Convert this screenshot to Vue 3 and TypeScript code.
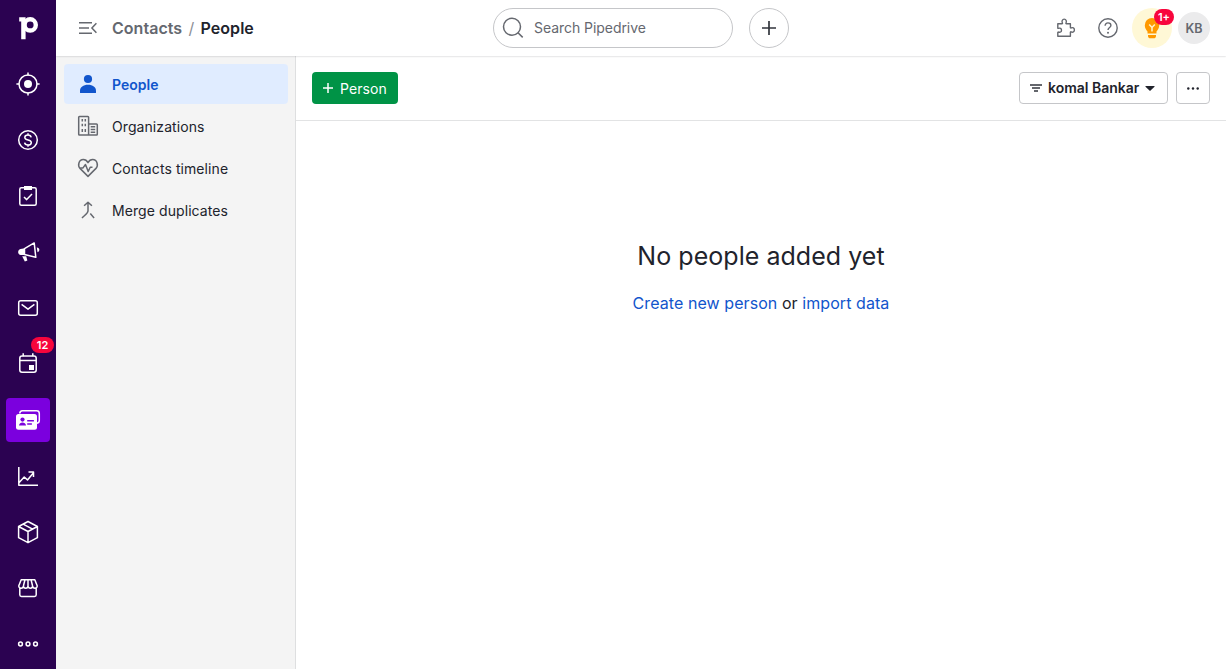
<script setup lang="ts">
interface RailItem { id: string; label: string; badge?: string; active?: boolean }
const rail: RailItem[] = [
  { id: 'logo', label: 'Pipedrive' },
  { id: 'leads', label: 'Leads' },
  { id: 'deals', label: 'Deals' },
  { id: 'projects', label: 'Projects' },
  { id: 'campaigns', label: 'Campaigns' },
  { id: 'mail', label: 'Mail' },
  { id: 'activities', label: 'Activities', badge: '12' },
  { id: 'contacts', label: 'Contacts', active: true },
  { id: 'insights', label: 'Insights' },
  { id: 'products', label: 'Products' },
  { id: 'marketplace', label: 'Marketplace' },
  { id: 'more', label: 'More' },
]
const menu: { id: string; label: string; active?: boolean }[] = [
  { id: 'people', label: 'People', active: true },
  { id: 'orgs', label: 'Organizations' },
  { id: 'timeline', label: 'Contacts timeline' },
  { id: 'merge', label: 'Merge duplicates' },
]
</script>

<template>
  <div class="app">
    <nav class="rail">
      <a v-for="r in rail" :key="r.id" class="cell" :aria-label="r.label">
        <span class="tile" :class="{ active: r.active }">
          <svg width="44" height="44" viewBox="6 6 44 44" fill="none" stroke="#fff" stroke-width="1.5" stroke-linejoin="round">
            <g v-if="r.id === 'logo'" stroke-width="4.4" stroke-linejoin="miter">
              <path d="M19.200 19.400h4.200V39.300" />
              <circle cx="30.200" cy="24.900" r="5.600" />
            </g>
            <g v-else-if="r.id === 'leads'">
              <circle cx="28" cy="28" r="9" />
              <circle cx="28" cy="28" r="4" fill="#fff" stroke="none" />
              <path d="M28 16.4v3M28 36.6v3M16.4 28h3M36.6 28h3" />
            </g>
            <g v-else-if="r.id === 'deals'">
              <circle cx="28" cy="28" r="9.3" />
              <path d="M31.200 25.300c-.3-1.500-1.500-2.300-3.200-2.300s-3.200 1-3.200 2.400c0 3.400 6.500 1.700 6.500 5 0 1.600-1.400 2.600-3.300 2.600s-3.200-.9-3.400-2.300M28 21.200v2M28 32.800v2" />
            </g>
            <g v-else-if="r.id === 'projects'">
              <rect x="19.8" y="19.700" width="16.400" height="17.600" rx="1.500" />
              <path d="M24 18h8v4h-8z" fill="#fff" stroke="none" />
              <path d="M24 29l2.700 2.600 5.300-5.500" />
            </g>
            <g v-else-if="r.id === 'campaigns'">
              <path d="M34.200 18.900L24.500 24.700v5.900l11.300 2.700z" />
              <path d="M25 24.200l-4.500.8c-3.300.7-3 5.900.3 5.900l4.200.1z" fill="#fff" stroke="none" />
              <path d="M22.200 32.300l4-.1 1.200 4.200-2.600 1.100z" fill="#fff" stroke="none" />
              <path d="M36.800 23.600c3-.2 3.400 4 .7 4.600z" fill="#fff" stroke="none" />
            </g>
            <g v-else-if="r.id === 'mail'">
              <rect x="18.700" y="20.700" width="18.600" height="14.600" rx="2" />
              <path d="M21.600 24.400L28 29.200l6.400-4.800" />
            </g>
            <g v-else-if="r.id === 'activities'">
              <rect x="19.800" y="20" width="16.400" height="16.200" rx="2.200" />
              <path d="M20 24.400h16M23.200 17.300v3M32.800 17.300v3" />
              <path d="M29 29h5v5h-5z" fill="#fff" stroke="none" />
            </g>
            <g v-else-if="r.id === 'contacts'">
              <path d="M19.800 21.500c0-1.800.8-2.800 2.600-2.800h14.200c1.700 0 2.700 1 2.700 2.700v7.200c0 1.700-.8 2.500-2.300 2.700" />
              <rect x="16" y="22" width="21" height="15.800" rx="2.500" fill="#fff" stroke="none" />
              <g fill="#7b00de" stroke="none">
                <circle cx="22.500" cy="27.600" r="2.100" />
                <path d="M19 33.600c.3-4.200 6.700-4.200 7 0z" />
              </g>
              <path d="M27.200 28.700h6.700M27.200 31.900h4.700" stroke="#7b00de" />
            </g>
            <g v-else-if="r.id === 'insights'">
              <path d="M18.800 19v18.200H38M19 34.800l5.200-5.800 3.300 2.900 5.800-6.800M28.500 24h5v5" />
            </g>
            <g v-else-if="r.id === 'products'">
              <path d="M28 17.500l9.400 5V33.700L28 38.700l-9.400-5V22.500zM18.600 22.500l9.400 5 9.400-5M28 27.500v11.200M23.100 20.100l9.500 5" />
            </g>
            <g v-else-if="r.id === 'marketplace'">
              <path d="M21.200 19.700h13.600l2.400 6c.3 3.200-4.400 3.200-4.600.3 0 2.900-4.600 2.900-4.600 0 0 2.900-4.600 2.900-4.600 0-.2 2.900-4.900 2.900-4.600-.3zM24.900 20l-1.500 6M28 20v6M31.100 20l1.500 6M19.800 28.200v6.600c0 1 .7 1.700 1.700 1.700h13c1 0 1.700-.7 1.700-1.700v-6.600" />
            </g>
            <g v-else>
              <circle cx="20.500" cy="28" r="1.900" />
              <circle cx="28" cy="28" r="1.900" />
              <circle cx="35.500" cy="28" r="1.900" />
            </g>
          </svg>
        </span>
        <span v-if="r.badge" class="badge rail-badge">{{ r.badge }}</span>
      </a>
    </nav>

    <div class="shell">
      <header class="top">
        <div class="crumbs">
          <svg class="collapse" width="20" height="20" viewBox="0 0 20 20" fill="none" stroke="#65686f" stroke-width="1.500">
            <path d="M1 4.800h13M1 10h10M1 15.300h13M18.400 5.200L13.900 10l4.500 4.800" />
          </svg>
          <span class="parent">Contacts</span><span class="slash">/</span><span class="current">People</span>
        </div>
        <div class="search">
          <svg width="24" height="24" viewBox="0 0 24 24" fill="none" stroke="#65686f" stroke-width="1.500">
            <circle cx="11" cy="10.700" r="8.500" /><path d="M17 16.700l4.700 4.700" />
          </svg>
          <span>Search Pipedrive</span>
        </div>
        <button class="add" aria-label="Quick add">
          <svg width="14" height="14" viewBox="0 0 14 14" stroke="#32353c" stroke-width="1.700"><path d="M7 0v14M0 7h14" /></svg>
        </button>
        <div class="tools">
          <svg class="puzzle" width="20" height="20" viewBox="0 0 20 20" fill="none" stroke="#65686f" stroke-width="1.400" stroke-linejoin="round">
            <path d="M1.800 5.800h4.200c.5 0 .6-.4.400-.8-.9-1.700-.1-3.900 1.800-3.900s2.700 2.200 1.800 3.900c-.2.400-.1.800.4.800h4v3.700c0 .5.4.6.8.400 1.600-.8 3.200.1 3.200 2s-1.600 2.800-3.200 2c-.4-.2-.8 0-.8.400v3.900h-12.600v-3.700c0-.5.4-.6.800-.4 1.500.6 2.900-.2 2.900-1.900s-1.400-2.500-2.900-1.900c-.4.200-.8 0-.8-.4z" />
          </svg>
          <svg class="help" width="20" height="20" viewBox="0 0 20 20" fill="none" stroke="#65686f" stroke-width="1.400">
            <circle cx="10" cy="10" r="9.200" />
            <path d="M7.100 7.800c0-1.800 1.200-2.900 2.900-2.900s2.900 1 2.900 2.500c0 2.100-2.900 2.200-2.900 4.700" />
            <circle cx="10" cy="14.700" r="1" fill="#65686f" stroke="none" />
          </svg>
          <div class="tips">
            <svg width="16" height="22" viewBox="0 0 16 22">
              <path d="M8 1a7.200 7.200 0 0 0-7.200 7.200c0 2.800 1.300 4.500 2.700 6.200v2.100h9v-2.100c1.400-1.700 2.700-3.400 2.700-6.200A7.200 7.200 0 0 0 8 1z" fill="#f90" />
              <path d="M4 18h8v1c0 1.400-1 2.300-2.300 2.300H6.300C5 21.300 4 20.400 4 19z" fill="#f90" />
              <path d="M5.200 7.500L8 10.400l2.800-2.900M8 10.400v4" fill="none" stroke="#fff5cc" stroke-width="1.500" />
            </svg>
            <span class="badge tip-badge">1+</span>
          </div>
          <div class="avatar">KB</div>
        </div>
      </header>

      <div class="body">
        <aside class="side">
          <a v-for="m in menu" :key="m.id" class="entry" :class="{ active: m.active }">
            <svg width="24" height="24" viewBox="0 0 24 24" fill="none" stroke="#65686f" stroke-width="1.500" stroke-linejoin="round">
              <g v-if="m.id === 'people'" fill="#1155cc" stroke="none">
                <circle cx="12" cy="7" r="4.100" />
                <path d="M4 20.500v-1.700c0-3.600 3.300-6 8-6s8 2.400 8 6v1.700q0 .6-.6.600H4.600q-.6 0-.6-.6z" />
              </g>
              <g v-else-if="m.id === 'orgs'">
                <path d="M12.600 21V3.200c0-.5-.3-.8-.8-.8H3.500c-.5 0-.8.300-.8.800v17.100c0 .5.300.8.800.8h17c.5 0 .8-.3.800-.8v-9.500c0-.5-.3-.8-.8-.8h-7.900" />
                <path d="M6.300 5v2.500M9.300 5v2.500M6.300 9.700v2.500M9.300 9.700v2.500M6.300 15v3M9.300 15v3M14.700 12.700h4.500M14.700 15.500h4.500M14.700 18.300h4.500" />
              </g>
              <g v-else-if="m.id === 'timeline'">
                <path d="M12 20.400L4 12.400C1.400 9.600 2.700 3.600 7.300 3.600c2.200 0 3.700 1.200 4.700 3 1-1.800 2.500-3 4.700-3 4.600 0 5.900 6 3.300 8.800z" />
                <path d="M4.200 12.100h2.600l2.700-3.600 2.700 7 2-4.200h2.300" />
              </g>
              <g v-else>
                <path d="M8.100 7.800L12 4.200l3.900 3.600M12 4.500v8.200c0 2.700-3.400 4.500-6 7.200M14.300 15.500l3.800 4.400" />
              </g>
            </svg>
            <span>{{ m.label }}</span>
          </a>
        </aside>

        <main class="main">
          <div class="actions">
            <button class="primary">
              <svg width="10" height="10" viewBox="0 0 10 10" stroke="#fff" stroke-width="1.500"><path d="M5 0v10M0 5h10" /></svg>
              <span>Person</span>
            </button>
            <div class="filters">
              <button class="filter">
                <svg width="12" height="8" viewBox="0 0 12 8" stroke="#32353c" stroke-width="1.500"><path d="M0 1h12M2 4h8M4 7h4" /></svg>
                <span>komal Bankar</span>
                <svg width="10" height="5" viewBox="0 0 10 5"><path d="M.5 0h9v.8L5 5 .5.800z" fill="#21232c" /></svg>
              </button>
              <button class="more" aria-label="More">
                <svg width="12" height="3" viewBox="0 0 12 3" fill="#21232c"><circle cx="1.300" cy="1.500" r="1.200" /><circle cx="6" cy="1.500" r="1.200" /><circle cx="10.700" cy="1.500" r="1.200" /></svg>
              </button>
            </div>
          </div>
          <div class="empty">
            <h1>No people added yet</h1>
            <p><a>Create new person</a> or <a>import data</a></p>
          </div>
        </main>
      </div>
    </div>
  </div>
</template>

<style>
body { overflow: hidden; }
</style>

<style scoped>
.app { display: flex; width: 1226px; height: 669px; overflow: hidden; background: #fff; color: #21232c; font-family: Inter, "Liberation Sans", sans-serif; font-size: 14px; }
.app *, .app { box-sizing: border-box; }
svg { display: block; flex: none; }
button { font: inherit; color: inherit; padding: 0; background: #fff; display: flex; align-items: center; }
.rail { width: 56px; flex: none; background: #2b0251; }
.cell { position: relative; height: 56px; display: flex; align-items: center; justify-content: center; }
.tile { width: 44px; height: 44px; border-radius: 4px; }
.tile.active { background: #7b00de; }
.badge { position: absolute; height: 16px; border-radius: 8px; background: #f8053c; color: #fff; font-size: 11px; font-weight: 600; line-height: 16px; text-align: center; }
.rail-badge { left: 31px; top: 1px; width: 23px; }
.shell { flex: 1; min-width: 0; display: flex; flex-direction: column; }
.top { position: relative; z-index: 1; height: 56px; flex: none; display: flex; align-items: center; padding: 0 16px 0 22px; background: #fff; box-shadow: 0 0 2px rgba(33, 35, 44, .3); }
.crumbs { width: 415px; display: flex; align-items: center; font-size: 16px; font-weight: 600; line-height: 24px; letter-spacing: .04px; }
.collapse { margin-right: 14px; }
.parent { color: #65686f; }
.slash { color: #8d9096; font-weight: 400; margin: 0 6.3px; }
.search { width: 240px; height: 40px; border: 1px solid #c5c6c9; border-radius: 20px; display: flex; align-items: center; padding-left: 7px; gap: 9px; color: #65686f; }
.search span { padding-bottom: 2px; letter-spacing: -.05px; }
.add { width: 40px; height: 40px; margin-left: 16px; border: 1px solid #c5c6c9; border-radius: 50%; justify-content: center; }
.tools { margin-left: auto; display: flex; align-items: center; }
.puzzle { margin-right: 22px; }
.help { margin-right: 14px; }
.tips { position: relative; width: 40px; height: 40px; border-radius: 50%; background: #fff8d6; display: flex; align-items: center; justify-content: center; }
.tip-badge { left: 22px; top: 1px; width: 20px; }
.avatar { width: 32px; height: 32px; margin-left: 6px; border-radius: 50%; background: #ebebec; color: #65686f; font-size: 12.5px; font-weight: 600; line-height: 33px; text-align: center; }
.body { flex: 1; display: flex; min-height: 0; }
.side { width: 240px; flex: none; background: #f4f4f4; border-right: 1px solid #dedfe0; padding: 8px 7px 0 8px; display: flex; flex-direction: column; gap: 2px; }
.entry { height: 40px; border-radius: 4px; display: flex; align-items: center; gap: 12px; padding: 0 12px; line-height: 20px; letter-spacing: .08px; }
.entry span { padding-top: 2px; }
.entry.active { background: #e0ecff; color: #1155cc; font-weight: 600; letter-spacing: 0; }
.main { flex: 1; min-width: 0; }
.actions { height: 65px; border-bottom: 1px solid #e2e3e4; padding: 0 16px; display: flex; align-items: center; justify-content: space-between; }
.primary { height: 32px; width: 86px; padding-left: 11px; gap: 7px; border: 0; border-radius: 4px; background: #009346; color: #fff; font-weight: 400; }
.primary span { padding-top: 1px; letter-spacing: .08px; }
.filters { display: flex; gap: 8px; }
.filter { width: 149px; height: 32px; padding-left: 10px; border: 1px solid #c5c6c9; border-radius: 4px; font-weight: 600; gap: 6px; }
.filter span { padding-bottom: 2px; }
.more { width: 34px; height: 32px; border: 1px solid #c5c6c9; border-radius: 4px; justify-content: center; }
.empty { padding-top: 119px; text-align: center; }
h1 { margin: 0; font-size: 25px; font-weight: 400; line-height: 32px; letter-spacing: .04px; }
p { margin: 19px 0 0; font-size: 16px; line-height: 24px; letter-spacing: .07px; }
p a { color: #1155cc; }
</style>
